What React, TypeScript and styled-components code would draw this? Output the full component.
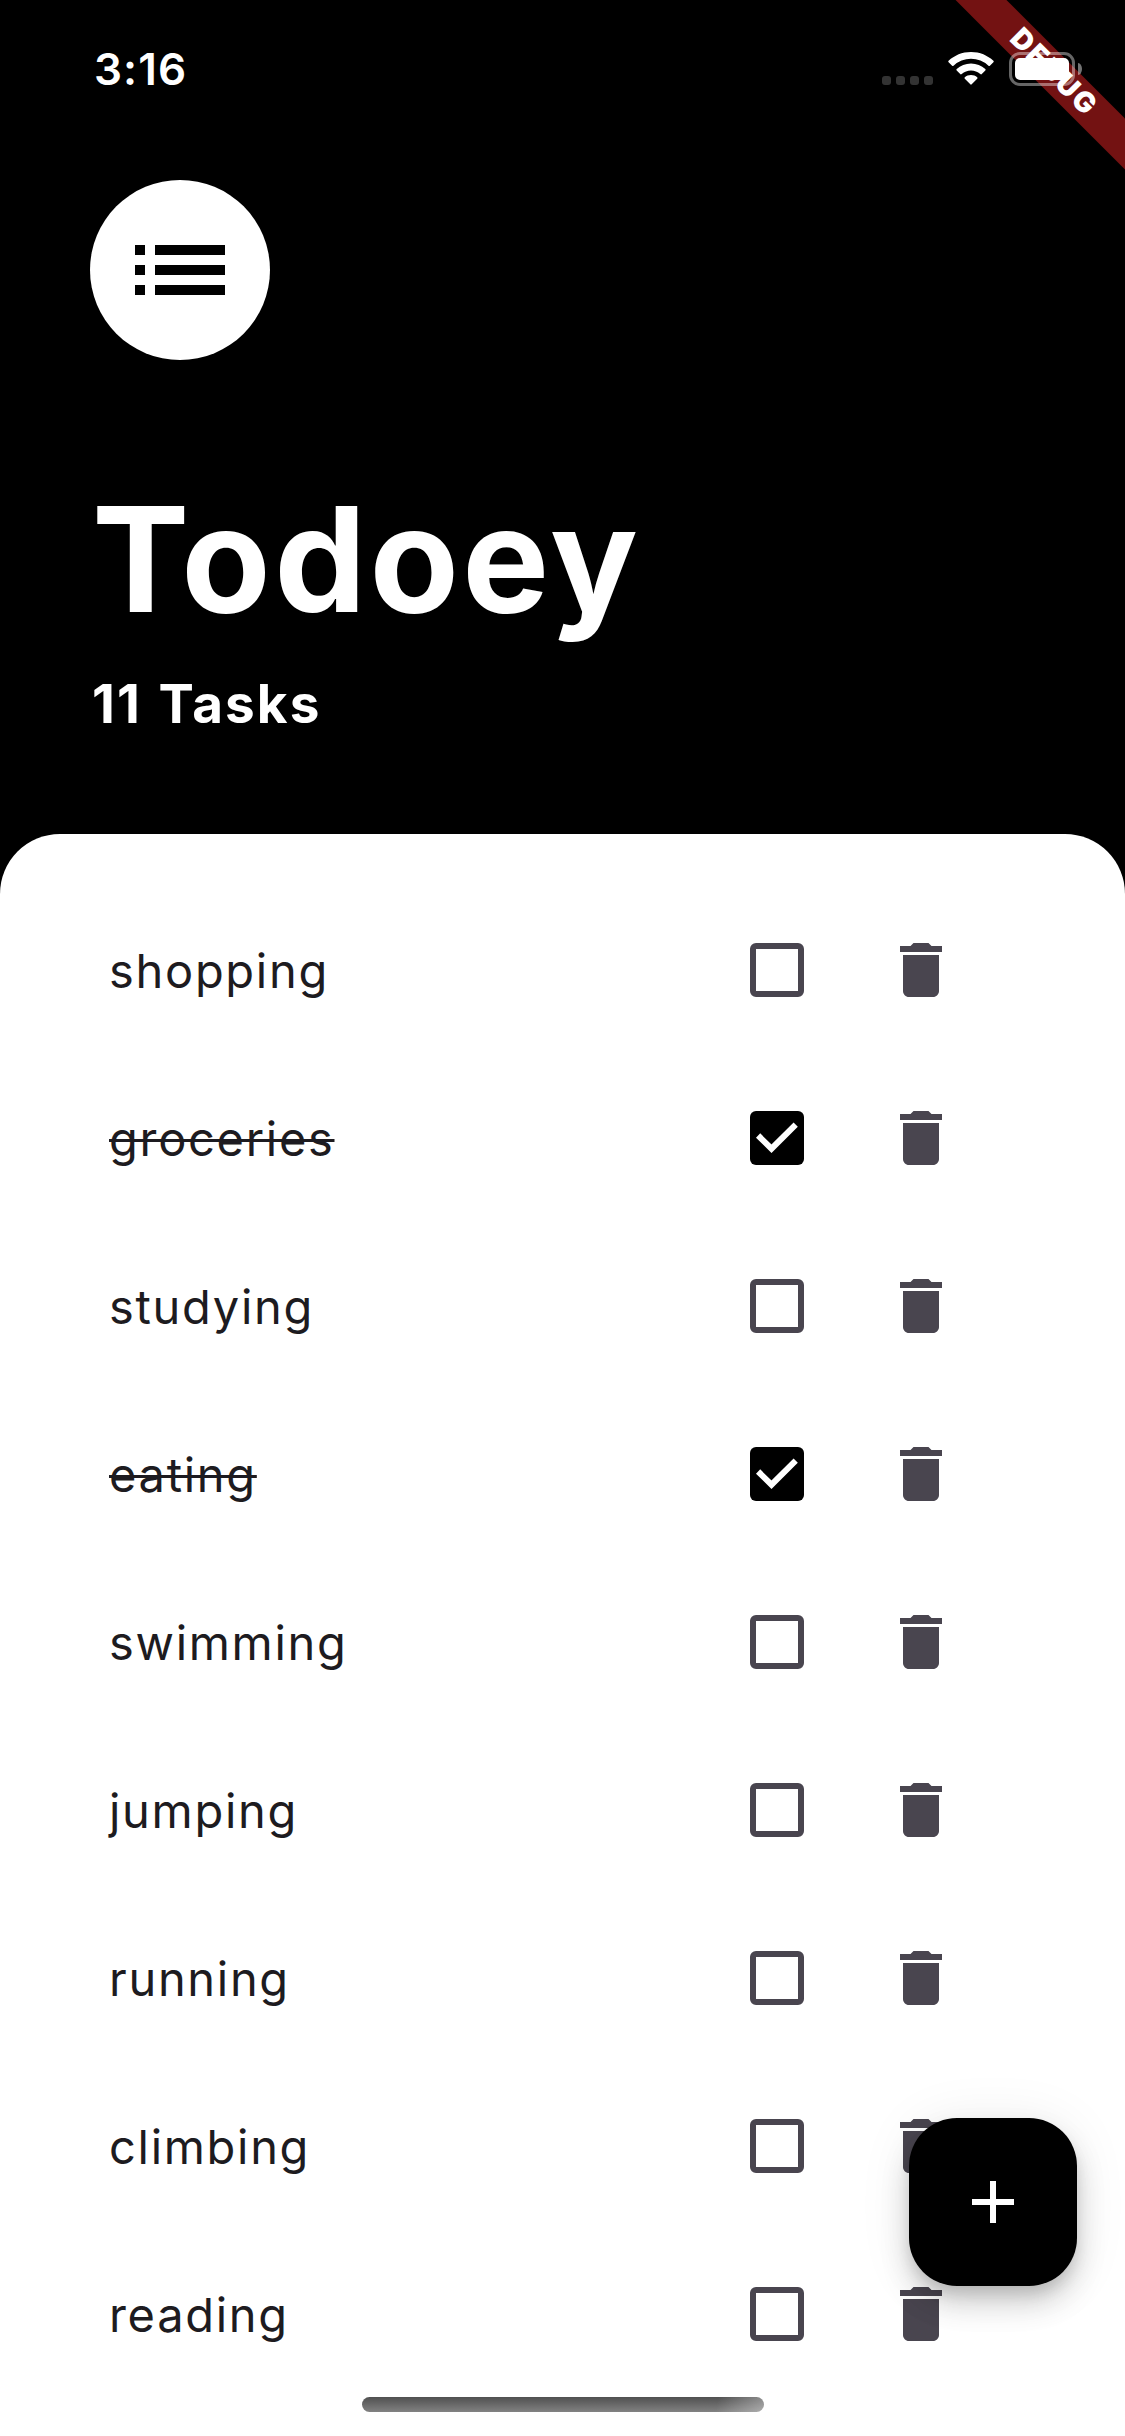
import React, { useState } from "react";
import styled, { createGlobalStyle } from "styled-components";

const GlobalStyle = createGlobalStyle`
  body {
    margin: 0;
    background: #000;
    font-family: Inter, "Liberation Sans", sans-serif;
  }
`;

const Screen = styled.main`
  position: relative;
  display: flex;
  flex-direction: column;
  width: 1125px;
  height: 2436px;
  overflow: hidden;
  background: #000;
`;

const StatusBar = styled.header`
  position: relative;
  z-index: 2;
  display: flex;
  justify-content: space-between;
  box-sizing: border-box;
  height: 132px;
  padding: 42px 43px 0 94px;
`;

const Clock = styled.time`
  height: 54px;
  color: #fff;
  font-size: 44px;
  font-weight: 600;
  line-height: 54px;
  letter-spacing: 1.1px;
`;

const StatusIcons = styled.div`
  display: flex;
  align-items: flex-start;
  padding-top: 10px;
`;

const SignalDots = styled.div`
  display: flex;
  gap: 5px;
  margin: 24px 15px 0 0;
`;

const Dot = styled.span`
  width: 9px;
  height: 9px;
  border-radius: 3px;
  background: #333;
`;

const Battery = styled.div`
  display: flex;
  align-items: center;
  gap: 3px;
  margin-left: 15px;
`;

const BatteryShell = styled.div`
  box-sizing: border-box;
  width: 66px;
  height: 34px;
  padding: 3px;
  border: 3px solid rgba(255, 255, 255, 0.4);
  border-radius: 11px;
`;

const BatteryLevel = styled.div`
  height: 22px;
  border-radius: 5px;
  background: #fff;
`;

const BatteryCap = styled.div`
  width: 4px;
  height: 12px;
  border-radius: 0 4px 4px 0 / 0 6px 6px 0;
  background: rgba(255, 255, 255, 0.45);
`;

const DebugBanner = styled.div`
  position: absolute;
  z-index: 1;
  top: 54px;
  left: 903px;
  box-sizing: border-box;
  width: 300px;
  height: 36px;
  padding-left: 2px;
  background: #731212;
  color: #fff;
  font-size: 28.5px;
  font-weight: 900;
  line-height: 34px;
  letter-spacing: 2.2px;
  text-align: center;
  transform: rotate(45deg);
`;

const Hero = styled.section`
  display: flex;
  flex-direction: column;
  align-items: flex-start;
  box-sizing: border-box;
  height: 702px;
  padding: 48px 90px 0;
  color: #fff;
`;

const Avatar = styled.div`
  display: flex;
  align-items: center;
  justify-content: center;
  width: 180px;
  height: 180px;
  border-radius: 50%;
  background: #fff;
  color: #000;
`;

const Title = styled.h1`
  margin: 111px 0 0 2px;
  font-size: 146px;
  font-weight: 700;
  line-height: 176px;
  letter-spacing: 3.3px;
`;

const Subtitle = styled.p`
  margin: 25px 0 0 2px;
  font-size: 53px;
  font-weight: 700;
  line-height: 64px;
  letter-spacing: 2.1px;
  word-spacing: 2px;
`;

const Sheet = styled.section`
  flex: 1;
  box-sizing: border-box;
  padding: 52px 90px 0;
  border-radius: 60px 60px 0 0;
  background: #fff;
`;

const TaskList = styled.ul`
  margin: 0;
  padding: 0;
  list-style: none;
`;

const TaskRow = styled.li`
  display: flex;
  align-items: center;
  height: 168px;
  padding: 0 78px 0 19px;
`;

const TaskName = styled.span<{ $done: boolean }>`
  padding-top: 2px;
  color: #1d1b20;
  font-size: 47px;
  line-height: 60px;
  letter-spacing: 1.7px;
  text-decoration: ${({ $done }) => ($done ? "line-through" : "none")};
  text-decoration-thickness: 3px;
`;

const Checkbox = styled.button<{ $checked: boolean }>`
  display: flex;
  box-sizing: border-box;
  width: 54px;
  height: 54px;
  margin: 0 81px 0 auto;
  padding: 0;
  border: ${({ $checked }) => ($checked ? "0" : "6px solid #49454f")};
  border-radius: 6px;
  background: ${({ $checked }) => ($checked ? "#000" : "transparent")};
`;

const DeleteButton = styled.button`
  display: flex;
  padding: 0;
  border: 0;
  background: transparent;
  color: #49454f;
`;

const AddButton = styled.button`
  position: absolute;
  right: 48px;
  bottom: 150px;
  display: flex;
  align-items: center;
  justify-content: center;
  width: 168px;
  height: 168px;
  padding: 0;
  border: 0;
  border-radius: 48px;
  background: #000;
  color: #fff;
  box-shadow:
    0 9px 15px -3px rgba(0, 0, 0, 0.14),
    0 18px 30px rgba(0, 0, 0, 0.16),
    0 3px 54px rgba(0, 0, 0, 0.08);
`;

const HomeIndicator = styled.div`
  position: absolute;
  bottom: 24px;
  left: 362px;
  width: 402px;
  height: 15px;
  border-radius: 8px;
  background:
    linear-gradient(100deg, transparent 88%, rgba(255, 255, 255, 0.35) 100%),
    linear-gradient(#505050, #828282);
`;

const WifiIcon = () => (
  <svg width="46" height="33" viewBox="0 0 46 33" fill="#fff">
    <path d="M23 0C31.8 0 39.7 3.4 45.4 8.8Q46.1 9.5 45.4 10.2L41.9 13.7Q41.2 14.3 40.5 13.7A25.5 25.5 0 0 0 5.5 13.7Q4.8 14.3 4.1 13.7L.6 10.2Q-.1 9.5.6 8.8C6.3 3.4 14.2 0 23 0Z" />
    <path d="M23 11.6c5.500 0 10.500 2.100 14.300 5.500q.8.700 0 1.500l-3.500 3.500q-.7.600-1.500 0a14 14 0 0 0-18.600 0q-.8.600-1.500 0l-3.500-3.500q-.8-.8 0-1.500c3.800-3.400 8.800-5.500 14.300-5.500Z" />
    <path d="M23 23.100c2.400 0 4.600.8 6.200 2.200q.7.700 0 1.400l-5.500 5.600q-.7.700-1.400 0l-5.500-5.600q-.7-.7 0-1.400c1.600-1.400 3.800-2.200 6.200-2.200Z" />
  </svg>
);

const ListIcon = () => (
  <svg width="120" height="120" viewBox="0 0 24 24" fill="currentColor">
    <path d="M3 13h2v-2H3v2zm0 4h2v-2H3v2zm0-8h2V7H3v2zm4 4h14v-2H7v2zm0 4h14v-2H7v2zM7 7v2h14V7H7z" />
  </svg>
);

const CheckIcon = () => (
  <svg width="54" height="54" viewBox="0 0 54 54" fill="none" stroke="#fff" strokeWidth="6">
    <path d="M8.100 24.500 21.500 37.700 45.700 13.600" />
  </svg>
);

const TrashIcon = () => (
  <svg width="72" height="72" viewBox="0 0 24 24" fill="currentColor">
    <path d="M6 19c0 1.100.9 2 2 2h8c1.100 0 2-.9 2-2V7H6v12zM19 4h-3.500l-1-1h-5l-1 1H5v2h14V4z" />
  </svg>
);

const PlusIcon = () => (
  <svg width="72" height="72" viewBox="0 0 24 24" fill="currentColor">
    <path d="M19 13h-6v6h-2v-6H5v-2h6V5h2v6h6v2z" />
  </svg>
);

const initialTasks = [
  { name: "shopping", done: false },
  { name: "groceries", done: true },
  { name: "studying", done: false },
  { name: "eating", done: true },
  { name: "swimming", done: false },
  { name: "jumping", done: false },
  { name: "running", done: false },
  { name: "climbing", done: false },
  { name: "reading", done: false },
];

const pendingCount = 2;

export default function App() {
  const [tasks, setTasks] = useState(initialTasks);

  const toggle = (name: string) =>
    setTasks((list) => list.map((t) => (t.name === name ? { ...t, done: !t.done } : t)));
  const remove = (name: string) => setTasks((list) => list.filter((t) => t.name !== name));

  return (
    <Screen>
      <GlobalStyle />
      <StatusBar>
        <Clock>3:16</Clock>
        <StatusIcons>
          <SignalDots>
            <Dot />
            <Dot />
            <Dot />
            <Dot />
          </SignalDots>
          <WifiIcon />
          <Battery>
            <BatteryShell>
              <BatteryLevel />
            </BatteryShell>
            <BatteryCap />
          </Battery>
        </StatusIcons>
      </StatusBar>
      <DebugBanner>DEBUG</DebugBanner>

      <Hero>
        <Avatar>
          <ListIcon />
        </Avatar>
        <Title>Todoey</Title>
        <Subtitle>{`${tasks.length + pendingCount} Tasks`}</Subtitle>
      </Hero>

      <Sheet>
        <TaskList>
          {tasks.map(({ name, done }) => (
            <TaskRow key={name}>
              <TaskName $done={done}>{name}</TaskName>
              <Checkbox $checked={done} onClick={() => toggle(name)}>
                {done && <CheckIcon />}
              </Checkbox>
              <DeleteButton onClick={() => remove(name)}>
                <TrashIcon />
              </DeleteButton>
            </TaskRow>
          ))}
        </TaskList>
      </Sheet>

      <AddButton>
        <PlusIcon />
      </AddButton>
      <HomeIndicator />
    </Screen>
  );
}
